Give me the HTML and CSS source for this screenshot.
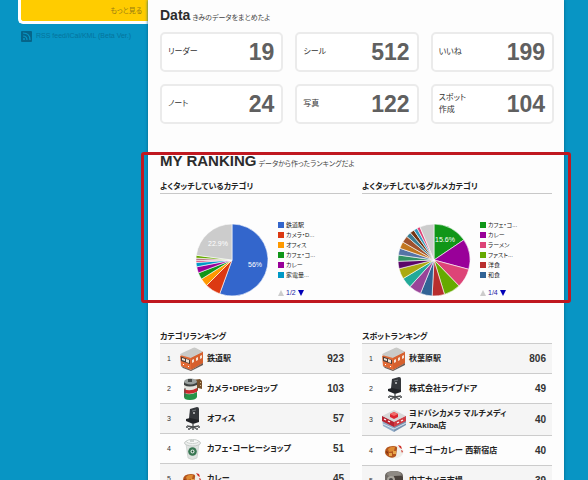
FILE: index.html
```html
<!DOCTYPE html>
<html lang="ja">
<head>
<meta charset="utf-8">
<title>MY RANKING</title>
<link rel="stylesheet" href="styles.css">
</head>
<body>
<svg class="defs" aria-hidden="true">
  <symbol id="train" viewBox="0 0 24 24">
    <path d="M0 9 14 1l9 4v11L10 23 1 19z" fill="#e36a35"/>
    <path d="M0 8Q0 7 2 6L13 1q1-1 3 0l7 4-12 6z" fill="#c9cac8"/>
    <path d="m11 11 12-6v11l-12 7z" fill="#d6602e"/>
    <path d="M1 9.500 10 13v4l-9-3z" fill="#473e3b"/>
    <path d="m2 11 3 1v2l-3-1zM6 12l3 1v3l-3-1zM12 13l2-1v3l-2 1zM16 11l2-1v3l-2 1zM20 9l2-1v3l-2 1z" fill="#f5e3d5"/>
    <path d="m1 19 10 4 12-7v2l-12 6-8-3z" fill="#6a5b54"/>
    <path d="M3 17h1v1H3zM8 19h1v1H8z" fill="#fff"/>
  </symbol>
  <symbol id="film" viewBox="0 0 24 24">
    <path d="m12 3 8-1 2 2v8l-4-1v3l-5-2z" fill="#76502c"/>
    <path d="M20 5h1v1h-1zM20 8h1v1h-1z" fill="#d5bd8b"/>
    <path d="M4 5v15q1 3 6 3t7-3V5z" fill="#e5e5df"/>
    <path d="M4 12q6 3 13-1v4q-7 3-13 1z" fill="#c92a2c"/>
    <path d="M4 16q6 3 13-1v5q-1 3-7 3t-6-3z" fill="#269448"/>
    <path d="M4 5v3q5 3 13 0V5z" fill="#3e4241"/>
    <ellipse cx="10.500" cy="4.500" rx="6.500" ry="3" fill="#9aa09e"/>
    <path d="M8 2h4v3H8z" fill="#474b49"/><path d="M5 11v9" stroke="#555" fill="none"/>
  </symbol>
  <symbol id="chair" viewBox="0 0 24 24">
    <path d="m10 2 7-2q2 0 2 2v11l-8 1q-2 0-2-3z" fill="#34373b"/>
    <path d="m6 12 4-1 9 2v2l-6 2-7-3z" fill="#212327"/>
    <path d="m12 4 4-1" stroke="#6d7276"/><circle cx="14" cy="6" r="1" fill="#c6c8ca"/>
    <path d="M13 16v5M7 19l6 1 6-1M9 22l4-2 4 2" stroke="#4c4f51" stroke-width="1.300" fill="none"/>
    <path d="M6 19h2v2H6zM18 19h2v2h-2zM8 21h2v2H8zM16 21h2v2h-2zM12 21h2v2h-2z" fill="#737678"/>
  </symbol>
  <symbol id="cup" viewBox="0 0 24 24">
    <path d="M6 7h13l-2 14q-5 3-9 0z" fill="#dfe3e1" stroke="#c1c7c4" stroke-width=".6"/>
    <ellipse cx="12.500" cy="6" rx="8" ry="3" fill="#eceeed" stroke="#c5cac8"/>
    <ellipse cx="12.500" cy="4.500" rx="6" ry="2" fill="#f8f9f8" stroke="#cbd0cd"/>
    <path d="M10 4h4" stroke="#a8afab"/>
    <circle cx="12.500" cy="14.500" r="4.300" fill="#377651"/><circle cx="12.500" cy="14.500" r="2" fill="#dbe7df"/><circle cx="12.500" cy="14.500" r=".9" fill="#174f30"/>
  </symbol>
  <symbol id="curry" viewBox="0 0 24 24">
    <ellipse cx="12" cy="13" rx="9.500" ry="6.500" fill="#f0eee9"/>
    <path d="M3 13q0-6 8-6 5 0 4 3l-1 7q-3 3-7 1-4-2-4-5z" fill="#b4541c"/>
    <path d="M6 10q3-3 7-2l-1 4-5 1z" fill="#dd8a32"/>
    <path d="M7 14h3v3H7zM11 12h3v3h-3z" fill="#e8a448"/><path d="m4 12 2 1-1 2z" fill="#702a0c"/>
    <path d="m16 6 3 1 1 3-2-1zM19 11l2 1-1 2z" fill="#ce3028"/>
  </symbol>
  <symbol id="store" viewBox="0 0 24 24">
    <path d="m0 8 12 6v10L1 18z" fill="#8fabc7"/><path d="m12 14 12-6v9l-12 7z" fill="#7993b0"/>
    <path d="m0 8 12-6 12 6-12 6z" fill="#d8d8d8"/>
    <path d="m0 8 12 6v5L0 13z" fill="#b82330"/><path d="m12 14 12-6v5l-12 6z" fill="#d13c43"/>
    <path d="m8 6 4-2 4 2v3l-4 2-4-2z" fill="#dc2530"/><path d="m8 6 4 2 4-2-4-2z" fill="#f16b69"/>
    <path d="m2 11 2 1M6 13l2 1M15 15l2-1M19 13l2-1" stroke="#fff" stroke-width="1.200"/>
    <path d="m1 16 11 5 12-6" stroke="#d7e4ee" fill="none"/>
  </symbol>
  <symbol id="camera" viewBox="0 0 24 24">
    <path d="M3 6q1-4 9-4t9 4v16H3z" fill="#716c67"/>
    <ellipse cx="12" cy="5" rx="7" ry="3" fill="#8e8a84"/>
    <path d="M12 7q8-1 9 1v9h-9z" fill="#49423d"/><circle cx="9" cy="11" r="4" fill="#aaa69e"/><circle cx="9" cy="11" r="2" fill="#4a4948"/>
  </symbol>
</svg>

<div class="page">
  <aside class="side">
    <div class="promo"><a href="#more">もっと見る</a></div>
    <a class="feed" href="#feed">
      <svg viewBox="0 0 11 11" aria-hidden="true"><rect width="11" height="11" rx="1" fill="#05658a"/><path d="M2 5q4 0 4 4M2 2q7 0 7 7" fill="none" stroke="#0895c4" stroke-width="1.200"/><circle cx="3" cy="8" r="1" fill="#0895c4"/></svg>
      <span>RSS feed/iCal/KML (Beta Ver.)</span>
    </a>
  </aside>

  <main class="main">
    <section>
      <h2 class="title">Data <small>きみのデータをまとめたよ</small></h2>
      <dl class="stats">
        <div class="stat"><dt>リーダー</dt><dd>19</dd></div>
        <div class="stat"><dt>シール</dt><dd>512</dd></div>
        <div class="stat"><dt>いいね</dt><dd>199</dd></div>
        <div class="stat"><dt>ノート</dt><dd>24</dd></div>
        <div class="stat"><dt>写真</dt><dd>122</dd></div>
        <div class="stat"><dt>スポット<br>作成</dt><dd>104</dd></div>
      </dl>
    </section>

    <section class="ranking">
      <h2 class="title title-large">MY RANKING <small>データから作ったランキングだよ</small></h2>
      <div class="columns">
        <div>
          <h3 class="sub ruled">よくタッチしているカテゴリ</h3>
          <div class="chart">
            <svg class="pie" id="pie-category" viewBox="-37 -37 74 74" role="img" aria-label="カテゴリ"></svg>
            <div>
              <ul class="legend">
                <li class="c-blue">鉄道駅</li><li class="c-red">カメラ・D...</li><li class="c-orange">オフィス</li><li class="c-green">カフェ・コ...</li><li class="c-purple">カレー</li><li class="c-cyan">家電量...</li>
              </ul>
              <div class="pager"><i class="up"></i><span>1/2</span><i class="down"></i></div>
            </div>
          </div>
        </div>
        <div>
          <h3 class="sub ruled">よくタッチしているグルメカテゴリ</h3>
          <div class="chart">
            <svg class="pie" id="pie-gourmet" viewBox="-37 -37 74 74" role="img" aria-label="グルメカテゴリ"></svg>
            <div>
              <ul class="legend">
                <li class="c-green">カフェ・コ...</li><li class="c-purple">カレー</li><li class="c-pink">ラーメン</li><li class="c-lime">ファスト...</li><li class="c-brick">洋食</li><li class="c-navy">和食</li>
              </ul>
              <div class="pager"><i class="up"></i><span>1/4</span><i class="down"></i></div>
            </div>
          </div>
        </div>
      </div>
    </section>

    <section class="columns">
      <div>
        <h3 class="sub">カテゴリランキング</h3>
        <table class="rank">
          <tr><td>1</td><td><svg><use href="#train"/></svg></td><th scope="row">鉄道駅</th><td>923</td></tr>
          <tr><td>2</td><td><svg><use href="#film"/></svg></td><th scope="row">カメラ・DPEショップ</th><td>103</td></tr>
          <tr><td>3</td><td><svg><use href="#chair"/></svg></td><th scope="row">オフィス</th><td>57</td></tr>
          <tr><td>4</td><td><svg><use href="#cup"/></svg></td><th scope="row">カフェ・コーヒーショップ</th><td>51</td></tr>
          <tr><td>5</td><td><svg><use href="#curry"/></svg></td><th scope="row">カレー</th><td>45</td></tr>
        </table>
      </div>
      <div>
        <h3 class="sub">スポットランキング</h3>
        <table class="rank">
          <tr><td>1</td><td><svg><use href="#train"/></svg></td><th scope="row">秋葉原駅</th><td>806</td></tr>
          <tr><td>2</td><td><svg><use href="#chair"/></svg></td><th scope="row">株式会社ライブドア</th><td>49</td></tr>
          <tr><td>3</td><td><svg><use href="#store"/></svg></td><th scope="row">ヨドバシカメラ マルチメディアAkiba店</th><td>40</td></tr>
          <tr><td>4</td><td><svg><use href="#curry"/></svg></td><th scope="row">ゴーゴーカレー 西新宿店</th><td>40</td></tr>
          <tr><td>5</td><td><svg><use href="#camera"/></svg></td><th scope="row">中古カメラ市場</th><td>39</td></tr>
        </table>
      </div>
    </section>
  </main>
</div>
<script src="pie.js"></script>
</body>
</html>
```
FILE: styles.css
```css
* { box-sizing: border-box; }
html { height: 100%; overflow: hidden; }
body {
  height: 100%;
  margin: 0;
  overflow: hidden;
  background: #0895c4;
  color: #333;
  font-family: "Liberation Sans", "Noto Sans CJK JP", sans-serif;
  font-size: 8px;
  line-height: 12px;
  font-feature-settings: "palt";
}
h2, h3, dl, dd, ul { margin: 0; padding: 0; }
a { color: inherit; text-decoration: none; }
.defs { display: none; }

.page {
  display: grid;
  grid-template-columns: 148px 1fr;
  padding-right: 24px;
  min-height: 100%;
}

.side { padding-left: 18px; }
.promo {
  height: 24px;
  padding: 5px 6px 0 0;
  background: #fc0;
  border: solid #fff;
  border-width: 0 0 3px 3px;
  border-radius: 0 0 0 5px;
  color: #987b12;
  font-size: 7px;
  text-align: right;
}
.feed {
  display: flex;
  align-items: center;
  gap: 4px;
  margin: 6px 0 0 3px;
  color: #05749c;
  font-size: 7px;
  white-space: nowrap;
}
.feed svg { width: 11px; height: 11px; }

.main {
  padding: 6px 10px 0 12px;
  background: #fdfdfd;
  box-shadow: 0 0 3px #036587;
}
.title {
  color: #2c2c2c;
  font-size: 14px;
  line-height: 18px;
  white-space: nowrap;
}
.title-large { font-size: 15px; }
.title small {
  margin-left: -2px;
  color: #444;
  font-size: 7px;
  font-weight: 400;
}

.stats {
  display: grid;
  grid-template-columns: repeat(3, 1fr);
  gap: 12px;
  margin-top: 5px;
}
.stat {
  display: flex;
  align-items: center;
  justify-content: space-between;
  height: 40px;
  padding: 0 7px 0 6px;
  border: 2px solid #ebebeb;
  border-radius: 5px;
  background: #fff;
}
.stat dd {
  color: #606060;
  font-size: 23px;
  font-weight: 700;
  line-height: 24px;
}

.ranking {
  position: relative;
  height: 151px;
  margin: 28px 0;
}
.ranking::after {
  content: "";
  position: absolute;
  inset: 0 -17px 0 -19px;
  border: 3px solid #c01820;
  border-radius: 3px;
  pointer-events: none;
}
.columns {
  display: grid;
  grid-template-columns: 1fr 1fr;
  gap: 12px;
  padding-right: 2px;
}
.sub {
  color: #222;
  font-size: 8px;
  line-height: 12px;
}
.ruled {
  margin-top: 8px;
  border-bottom: 1px solid #c8c8c8;
}
.chart {
  display: flex;
  gap: 9px;
  padding: 26px 0 0 35px;
}
.pie { flex: none; width: 74px; height: 74px; margin-top: 3px; }
.pie path { stroke: #fff; stroke-width: .6; }
.pie text {
  fill: #fff;
  font-size: 7px;
  text-anchor: middle;
}
.legend { list-style: none; font-size: 6px; }
.legend li {
  display: flex;
  align-items: center;
  gap: 2px;
  height: 10px;
  line-height: 10px;
  white-space: nowrap;
}
.legend li::before {
  content: "";
  width: 6px;
  height: 6px;
  background: currentColor;
}
.legend li { -webkit-text-fill-color: #222; }
.c-blue { color: #36c; }
.c-red { color: #dc3912; }
.c-orange { color: #f90; }
.c-green { color: #109618; }
.c-purple { color: #909; }
.c-cyan { color: #0099c6; }
.c-pink { color: #d47; }
.c-lime { color: #6a0; }
.c-brick { color: #b82e2e; }
.c-navy { color: #316395; }
.pager {
  display: flex;
  align-items: center;
  gap: 2px;
  margin-top: 7px;
  color: #2222a5;
  font-size: 7px;
}
.pager i { border: 3px solid transparent; }
.pager .up { border-top: 0; border-bottom: 6px solid #ccc; }
.pager .down { border-bottom: 0; border-top: 6px solid #0000b8; }

.rank {
  width: 100%;
  border-collapse: collapse;
}
.rank tr { height: 30px; border-top: 1px solid #ccc; }
.rank tr:nth-child(odd) { background: #f5f5f5; }
.rank td { padding: 0; }
.rank td:nth-child(1) {
  width: 18px;
  font-size: 7px;
  text-align: center;
}
.rank td:nth-child(2) { width: 29px; padding-left: 2px; }
.rank th {
  padding: 4px 14px 3px 0;
  color: #222;
  line-height: 12px;
  text-align: left;
}
.rank td:last-child {
  width: 28px;
  padding-right: 6px;
  font-size: 10px;
  font-weight: 700;
  text-align: right;
}
.rank svg { display: block; width: 24px; height: 24px; }
```
FILE: pie.js
```js
// Each slice is [end angle in degrees clockwise from the top, colour].
const pies = {
  "pie-category": {
    slices: [[200, "#3366cc"], [225, "#dc3912"], [238, "#ff9900"], [249, "#109618"],
      [259, "#990099"], [266, "#0099c6"], [269, "#dd4477"], [273, "#b87388"],
      [277.6, "#66aa00"], [360, "#cccccc"]],
    labels: [["56%", 23, 7], ["22.9%", -14, -14]]
  },
  "pie-gourmet": {
    slices: [[56, "#109618"], [105, "#990099"], [136, "#dd4477"], [163, "#66aa00"],
      [183, "#b82e2e"], [202, "#316395"], [222, "#994499"], [239, "#22aa99"],
      [256, "#aaaa11"], [268, "#5b0668"], [278, "#329262"], [289, "#5574a6"],
      [300, "#c27720"], [311, "#a0522d"], [319, "#3b7d91"], [326, "#743411"],
      [332, "#3399bb"], [337, "#dd4477"], [360, "#cccccc"]],
    labels: [["15.6%", 11, -18]]
  }
};

const R = 36;
const NS = "http://www.w3.org/2000/svg";
const point = deg => {
  const a = deg * Math.PI / 180;
  return `${R * Math.sin(a)} ${-R * Math.cos(a)}`;
};

for (const [id, pie] of Object.entries(pies)) {
  const svg = document.getElementById(id);
  let start = 0;
  for (const [end, colour] of pie.slices) {
    const path = document.createElementNS(NS, "path");
    const large = end - start > 180 ? 1 : 0;
    path.setAttribute("d", `M0 0L${point(start)}A${R} ${R} 0 ${large} 1 ${point(end)}Z`);
    path.setAttribute("fill", colour);
    svg.append(path);
    start = end;
  }
  for (const [text, x, y] of pie.labels) {
    const label = document.createElementNS(NS, "text");
    label.setAttribute("x", x);
    label.setAttribute("y", y);
    label.textContent = text;
    svg.append(label);
  }
}
```
